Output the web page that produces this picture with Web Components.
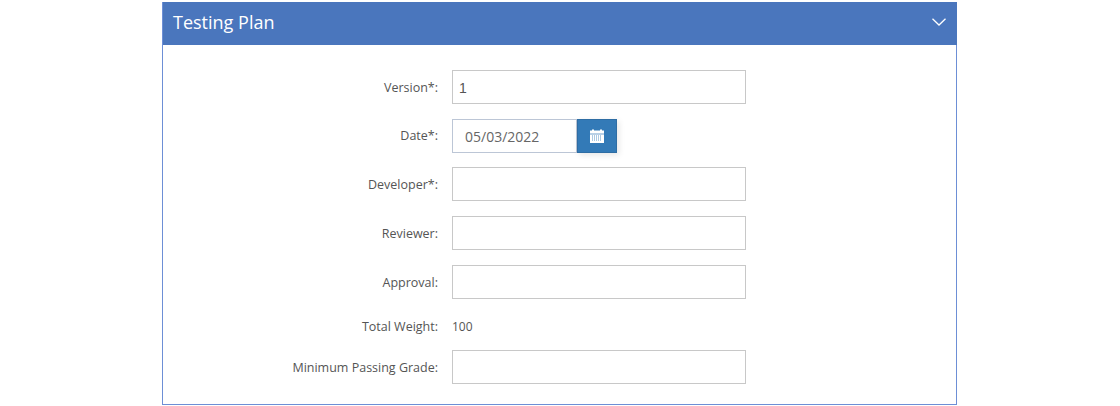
<!DOCTYPE html>
<html>
<head>
<meta charset="utf-8">
<style>
    html, body { margin: 0; background: #fff; }
    body { font-family: "Open Sans", sans-serif; height: 406px; overflow: hidden; }
</style>
</head>
<body>
<collapse-panel title="Testing Plan">
    <form-row label="Version*:"><text-field value="1" class="plain"></text-field></form-row>
    <form-row label="Date*:"><date-field value="05/03/2022"></date-field></form-row>
    <form-row label="Developer*:"><text-field></text-field></form-row>
    <form-row label="Reviewer:"><text-field></text-field></form-row>
    <form-row label="Approval:"><text-field></text-field></form-row>
    <form-row label="Total Weight:" class="static"><span>100</span></form-row>
    <form-row label="Minimum Passing Grade:"><text-field></text-field></form-row>
</collapse-panel>

<script>
class CollapsePanel extends HTMLElement {
    constructor() {
        super();
        this.attachShadow({ mode: 'open' });
        this.shadowRoot.innerHTML = `
            <style>
                :host {
                    display: block;
                    box-sizing: border-box;
                    width: 795px;
                    height: 403px;
                    margin: 2px 0 0 162px;
                    border: 1px solid #6d8fd6;
                    border-top: 0;
                }
                .heading {
                    display: flex;
                    align-items: center;
                    justify-content: space-between;
                    box-sizing: border-box;
                    height: 43px;
                    margin: 0 -1px 0 0;
                    padding: 0 11px 4px 10px;
                    background: #4a76bd;
                    color: #fff;
                    font-size: 18px;
                }
                svg { width: 14px; height: 8px; display: block; }
                .body {
                    display: flex;
                    flex-direction: column;
                    gap: 15px;
                    padding-top: 25px;
                }
            </style>
            <div class="heading">
                <span id="title"></span>
                <svg viewBox="0 0 14 8" fill="none" stroke="#fff" stroke-width="1.3"><path d="M.5.7 7 7 13.5.7"/></svg>
            </div>
            <div class="body"><slot></slot></div>
        `;
    }

    connectedCallback() {
        this.shadowRoot.querySelector('#title').textContent = this.getAttribute('title');
    }
}

class FormRow extends HTMLElement {
    constructor() {
        super();
        this.attachShadow({ mode: 'open' });
        this.shadowRoot.innerHTML = `
            <style>
                :host {
                    display: flex;
                    align-items: center;
                    gap: 14px;
                    color: #555;
                    font-size: 12px;
                }
                :host(.static) { height: 21px; padding-top: 2px; margin-bottom: -2px; }
                label { width: 275px; text-align: right; font-weight: 500; flex: none; font-size: 12.5px; }
            </style>
            <label></label>
            <slot></slot>
        `;
    }

    connectedCallback() {
        this.shadowRoot.querySelector('label').textContent = this.getAttribute('label');
    }
}

class TextField extends HTMLElement {
    constructor() {
        super();
        this.attachShadow({ mode: 'open' });
        this.shadowRoot.innerHTML = `
            <style>
                :host {
                    display: flex;
                    align-items: center;
                    box-sizing: border-box;
                    width: 294px;
                    height: 34px;
                    padding: 1px 6px 0;
                    border: 1px solid #c8c8c8;
                    background: #fff;
                    color: #555;
                    font: 14px "Liberation Sans", sans-serif;
                }
            </style>
            <span id="value"></span>
        `;
    }

    connectedCallback() {
        this.shadowRoot.querySelector('#value').textContent = this.getAttribute('value') || '';
    }
}

class DateField extends HTMLElement {
    constructor() {
        super();
        this.attachShadow({ mode: 'open' });
        this.shadowRoot.innerHTML = `
            <style>
                :host { display: flex; height: 34px; margin-bottom: -1px; }
                .input {
                    display: flex;
                    align-items: center;
                    box-sizing: border-box;
                    width: 125px;
                    padding: 0 0 0 12px;
                    border: 1px solid #bcc6d6;
                    color: #666;
                    font-size: 14px;
                }
                button {
                    display: flex;
                    align-items: center;
                    justify-content: center;
                    box-sizing: border-box;
                    width: 40px;
                    padding: 0;
                    border: 1px solid #2e6da4;
                    background: #337ab7;
                    box-shadow: 2px 2px 6px rgba(0, 0, 0, .1);
                }
                svg { width: 14px; height: 14px; display: block; }
            </style>
            <div class="input" id="value"></div>
            <button type="button">
                <svg viewBox="0 0 14 14">
                    <path fill="#fff" d="M0 1.500h2V.5h2v1h6v-1h2v1h2V14H0z"/>
                    <path stroke="#337ab7" stroke-width=".7" d="M0 5h14"/>
                    <path stroke="#5d95c6" stroke-dasharray="1 1" d="M2 7h10M2 9h10M2 11h10"/>
                </svg>
            </button>
        `;
    }

    connectedCallback() {
        this.shadowRoot.querySelector('#value').textContent = this.getAttribute('value');
    }
}

customElements.define('collapse-panel', CollapsePanel);
customElements.define('form-row', FormRow);
customElements.define('text-field', TextField);
customElements.define('date-field', DateField);
</script>
</body>
</html>
